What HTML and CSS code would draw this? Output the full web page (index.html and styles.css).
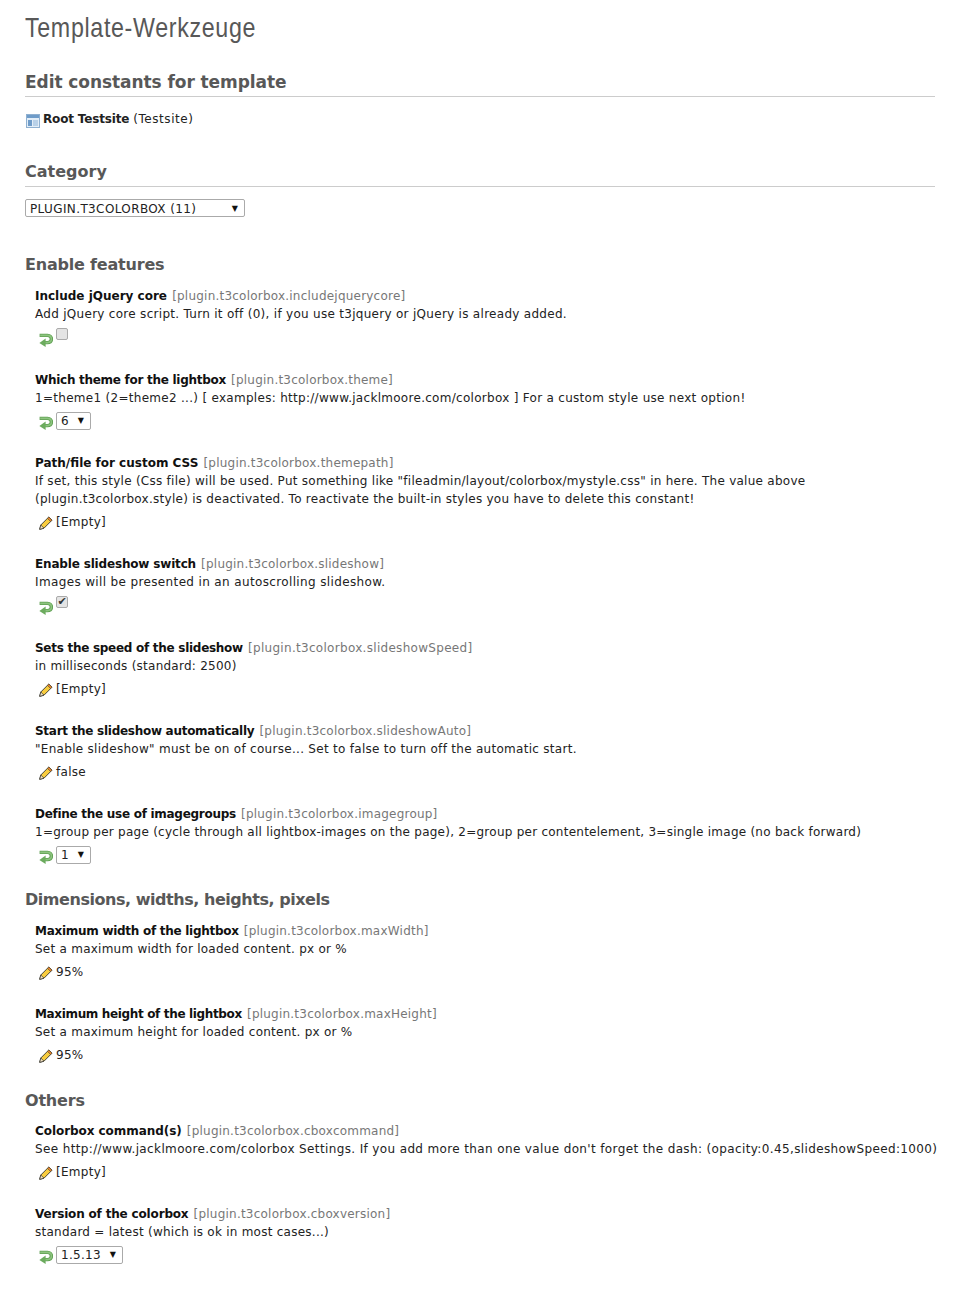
FILE: index.html
```html
<!DOCTYPE html>
<html lang="en">
<head>
<meta charset="utf-8">
<title>Template-Werkzeuge</title>
<link rel="stylesheet" href="styles.css">
</head>
<body>
<svg class="defs" width="0" height="0" aria-hidden="true">
  <symbol id="undo" viewBox="0 0 14 14">
    <path d="M.6 2.4H8.5C11.4 2.4 12.4 4.2 12.4 6S11.4 9.6 8.5 9.6H5.5" fill="none" stroke="#5f9f52" stroke-width="3.4"/>
    <path d="M1.2 2.4H8.5C10.6 2.4 12.4 3.8 12.4 6S10.6 9.6 8.5 9.6H5.5" fill="none" stroke="#8cc47e" stroke-width="1.6"/>
    <path d="M6.6 5.6V14L.4 10Z" fill="#6cab5e"/>
  </symbol>
  <symbol id="pencil" viewBox="0 0 14 14">
    <path d="M.7 13.3L1.8 9L9.8 1L13 4.2L5 12.2Z" fill="#f8cc3e" stroke="#45453a" stroke-width="1"/>
    <path d="M9.8 1L13 4.2L11.6 5.6L8.4 2.4Z" fill="#e9852b" stroke="#45453a" stroke-width=".6"/>
    <path d="M.7 13.3L1.8 9L5 12.2Z" fill="#f3e2c0" stroke="#333" stroke-width=".7"/>
  </symbol>
</svg>
<main class="page">
  <h1 class="title"><span class="title-text">Template-Werkzeuge</span></h1>
  <h2 class="section ruled lead">Edit constants for template</h2>
  <div class="root">
    <svg class="page-icon" width="14" height="14" viewBox="0 0 14 14" aria-hidden="true">
      <rect x=".5" y=".5" width="13" height="13" fill="#e3eef8" stroke="#8fb0d0"/>
      <rect x="1" y="1" width="12" height="3" fill="#6f9cc9"/>
      <rect x="2" y="6" width="4" height="6" fill="#6f9cc9"/>
      <rect x="7" y="6" width="5" height="6" fill="#b9d1e8"/>
    </svg>
    <span><strong>Root Testsite</strong> <span class="root-note">(Testsite)</span></span>
  </div>
  <h2 class="section ruled category">Category</h2>
  <div class="select select-wide"><span>PLUGIN.T3COLORBOX (11)</span><i class="arrow">▼</i></div>

  <h2 class="section features">Enable features</h2>

  <section class="item">
    <div class="head"><strong class="loose">Include jQuery core</strong> <span class="key">[plugin.t3colorbox.includejquerycore]</span></div>
    <div>Add jQuery core script. Turn it off (0), if you use t3jquery or jQuery is already added.</div>
    <div class="control control-check"><svg class="undo"><use href="#undo"/></svg><span class="box"></span></div>
  </section>

  <section class="item">
    <div class="head"><strong>Which theme for the lightbox</strong> <span class="key">[plugin.t3colorbox.theme]</span></div>
    <div>1=theme1 (2=theme2 ...) [ examples: http://www.jacklmoore.com/colorbox ] For a custom style use next option!</div>
    <div class="control"><svg class="undo"><use href="#undo"/></svg><div class="select select-small"><span>6</span><i class="arrow">▼</i></div></div>
  </section>

  <section class="item">
    <div class="head"><strong class="loose">Path/file for custom CSS</strong> <span class="key">[plugin.t3colorbox.themepath]</span></div>
    <div class="desc-snug">If set, this style (Css file) will be used. Put something like "fileadmin/layout/colorbox/mystyle.css" in here. The value above<br>(plugin.t3colorbox.style) is deactivated. To reactivate the built-in styles you have to delete this constant!</div>
    <div class="control"><svg class="pencil"><use href="#pencil"/></svg><span>[Empty]</span></div>
  </section>

  <section class="item">
    <div class="head"><strong class="mid">Enable slideshow switch</strong> <span class="key">[plugin.t3colorbox.slideshow]</span></div>
    <div class="desc-wide">Images will be presented in an autoscrolling slideshow.</div>
    <div class="control control-check"><svg class="undo"><use href="#undo"/></svg><span class="box checked">✔</span></div>
  </section>

  <section class="item">
    <div class="head"><strong>Sets the speed of the slideshow</strong> <span class="key key-wide">[plugin.t3colorbox.slideshowSpeed]</span></div>
    <div class="desc-tight">in milliseconds (standard: 2500)</div>
    <div class="control"><svg class="pencil"><use href="#pencil"/></svg><span>[Empty]</span></div>
  </section>

  <section class="item">
    <div class="head"><strong>Start the slideshow automatically</strong> <span class="key">[plugin.t3colorbox.slideshowAuto]</span></div>
    <div>"Enable slideshow" must be on of course... Set to false to turn off the automatic start.</div>
    <div class="control"><svg class="pencil"><use href="#pencil"/></svg><span>false</span></div>
  </section>

  <section class="item">
    <div class="head"><strong>Define the use of imagegroups</strong> <span class="key">[plugin.t3colorbox.imagegroup]</span></div>
    <div class="desc-tight">1=group per page (cycle through all lightbox-images on the page), 2=group per contentelement, 3=single image (no back forward)</div>
    <div class="control"><svg class="undo"><use href="#undo"/></svg><div class="select select-small"><span>1</span><i class="arrow">▼</i></div></div>
  </section>

  <h2 class="section group">Dimensions, widths, heights, pixels</h2>

  <section class="item">
    <div class="head"><strong>Maximum width of the lightbox</strong> <span class="key">[plugin.t3colorbox.maxWidth]</span></div>
    <div class="desc-tight">Set a maximum width for loaded content. px or %</div>
    <div class="control"><svg class="pencil"><use href="#pencil"/></svg><span>95%</span></div>
  </section>

  <section class="item">
    <div class="head"><strong class="tighter">Maximum height of the lightbox</strong> <span class="key">[plugin.t3colorbox.maxHeight]</span></div>
    <div class="desc-tight">Set a maximum height for loaded content. px or %</div>
    <div class="control"><svg class="pencil"><use href="#pencil"/></svg><span>95%</span></div>
  </section>

  <h2 class="section group others">Others</h2>

  <section class="item">
    <div class="head"><strong class="tight-some">Colorbox command(s)</strong> <span class="key">[plugin.t3colorbox.cboxcommand]</span></div>
    <div class="nowrap">See http://www.jacklmoore.com/colorbox Settings. If you add more than one value don't forget the dash: (opacity:0.45,slideshowSpeed:1000)</div>
    <div class="control"><svg class="pencil"><use href="#pencil"/></svg><span>[Empty]</span></div>
  </section>

  <section class="item">
    <div class="head"><strong class="mid">Version of the colorbox</strong> <span class="key">[plugin.t3colorbox.cboxversion]</span></div>
    <div class="desc-tight">standard = latest (which is ok in most cases...)</div>
    <div class="control"><svg class="undo"><use href="#undo"/></svg><div class="select select-version"><span>1.5.13</span><i class="arrow">▼</i></div></div>
  </section>
</main>
</body>
</html>
```

FILE: styles.css
```css
* { box-sizing: border-box; }
html, body { margin: 0; padding: 0; background: #fff; }
body {
  font-family: "DejaVu Sans", Verdana, sans-serif;
  font-size: 12px;
  line-height: 18px;
  letter-spacing: .29px;
  color: #222;
  overflow-x: hidden;
}
.defs { position: absolute; }
.page { width: 935px; padding: 0 0 30px 25px; }
.title {
  margin: 0;
  padding-top: 12px;
  height: 61px;
  font-family: "Liberation Sans", sans-serif;
  font-weight: 400;
  font-size: 28px;
  line-height: 32px;
  letter-spacing: .8px;
  color: #585858;
}
.title-text { display: inline-block; transform: scaleX(.83); transform-origin: left center; white-space: nowrap; }
.section {
  margin: 0;
  font-weight: 700;
  font-size: 16px;
  line-height: 20px;
  letter-spacing: 0;
  color: #585858;
}
.ruled { border-bottom: 1px solid #ccc; padding-bottom: 5px; height: 25px; }
.lead { font-size: 17px; height: 25px; margin-top: 11px; padding-bottom: 4px; letter-spacing: -.07px; }
.root { margin-top: 13px; display: flex; align-items: center; gap: 3px; }
.root strong { color: #222; letter-spacing: -.17px; }
.root-note { letter-spacing: .55px; }
.page-icon { margin-top: 3px; margin-left: 1px; }
.category { margin-top: 34px; }
.select {
  display: flex;
  justify-content: space-between;
  align-items: center;
  height: 18px;
  padding: 1px 6px 0 4px;
  background: #fff;
  border: 1px solid #aaa;
  border-radius: 2px;
  line-height: 16px;
}
.select-wide { width: 220px; margin-top: 12px; letter-spacing: .38px; }
.select-small { width: 35px; }
.select-version { width: 67px; }
.arrow { font-style: normal; font-size: 8px; color: #111; letter-spacing: 0; }
.features { margin-top: 38px; letter-spacing: -.2px; }
.group { margin-top: 24px; letter-spacing: -.46px; }
.others { margin-top: 25px; letter-spacing: -.2px; }
.item { padding-left: 10px; }
.features + .item { margin-top: 12px; }
.group + .item { margin-top: 12px; }
.others + .item { margin-top: 11px; }
.item + .item { margin-top: 22px; }
.key { color: #777; letter-spacing: .22px; margin-left: 1px; }
.key-wide { letter-spacing: .3px; }
.head strong { color: #111; letter-spacing: -.28px; }
.head strong.mid { letter-spacing: -.17px; }
.head strong.loose { letter-spacing: 0; }
.head strong.tighter { letter-spacing: -.35px; }
.head strong.tight-some { letter-spacing: -.06px; }
.desc-tight { letter-spacing: .25px; }
.desc-snug { letter-spacing: .265px; }
.desc-wide { letter-spacing: .36px; }
.nowrap { white-space: nowrap; letter-spacing: .37px; }
.control { display: flex; align-items: center; height: 23px; margin-top: 2px; padding-left: 4px; }
.control-check { height: 24px; }
.undo { width: 14px; height: 14px; margin-top: 5px; margin-right: 3px; flex: none; }
.pencil { width: 14px; height: 14px; margin-top: 3px; margin-right: 3px; flex: none; }
.box {
  width: 12px; height: 12px;
  margin-top: -7px;
  background: #e4e4e4;
  border: 1px solid #aaa;
  border-radius: 2px;
  font-size: 11px;
  line-height: 10px;
  letter-spacing: 0;
  text-align: center;
  color: #333;
}
```
